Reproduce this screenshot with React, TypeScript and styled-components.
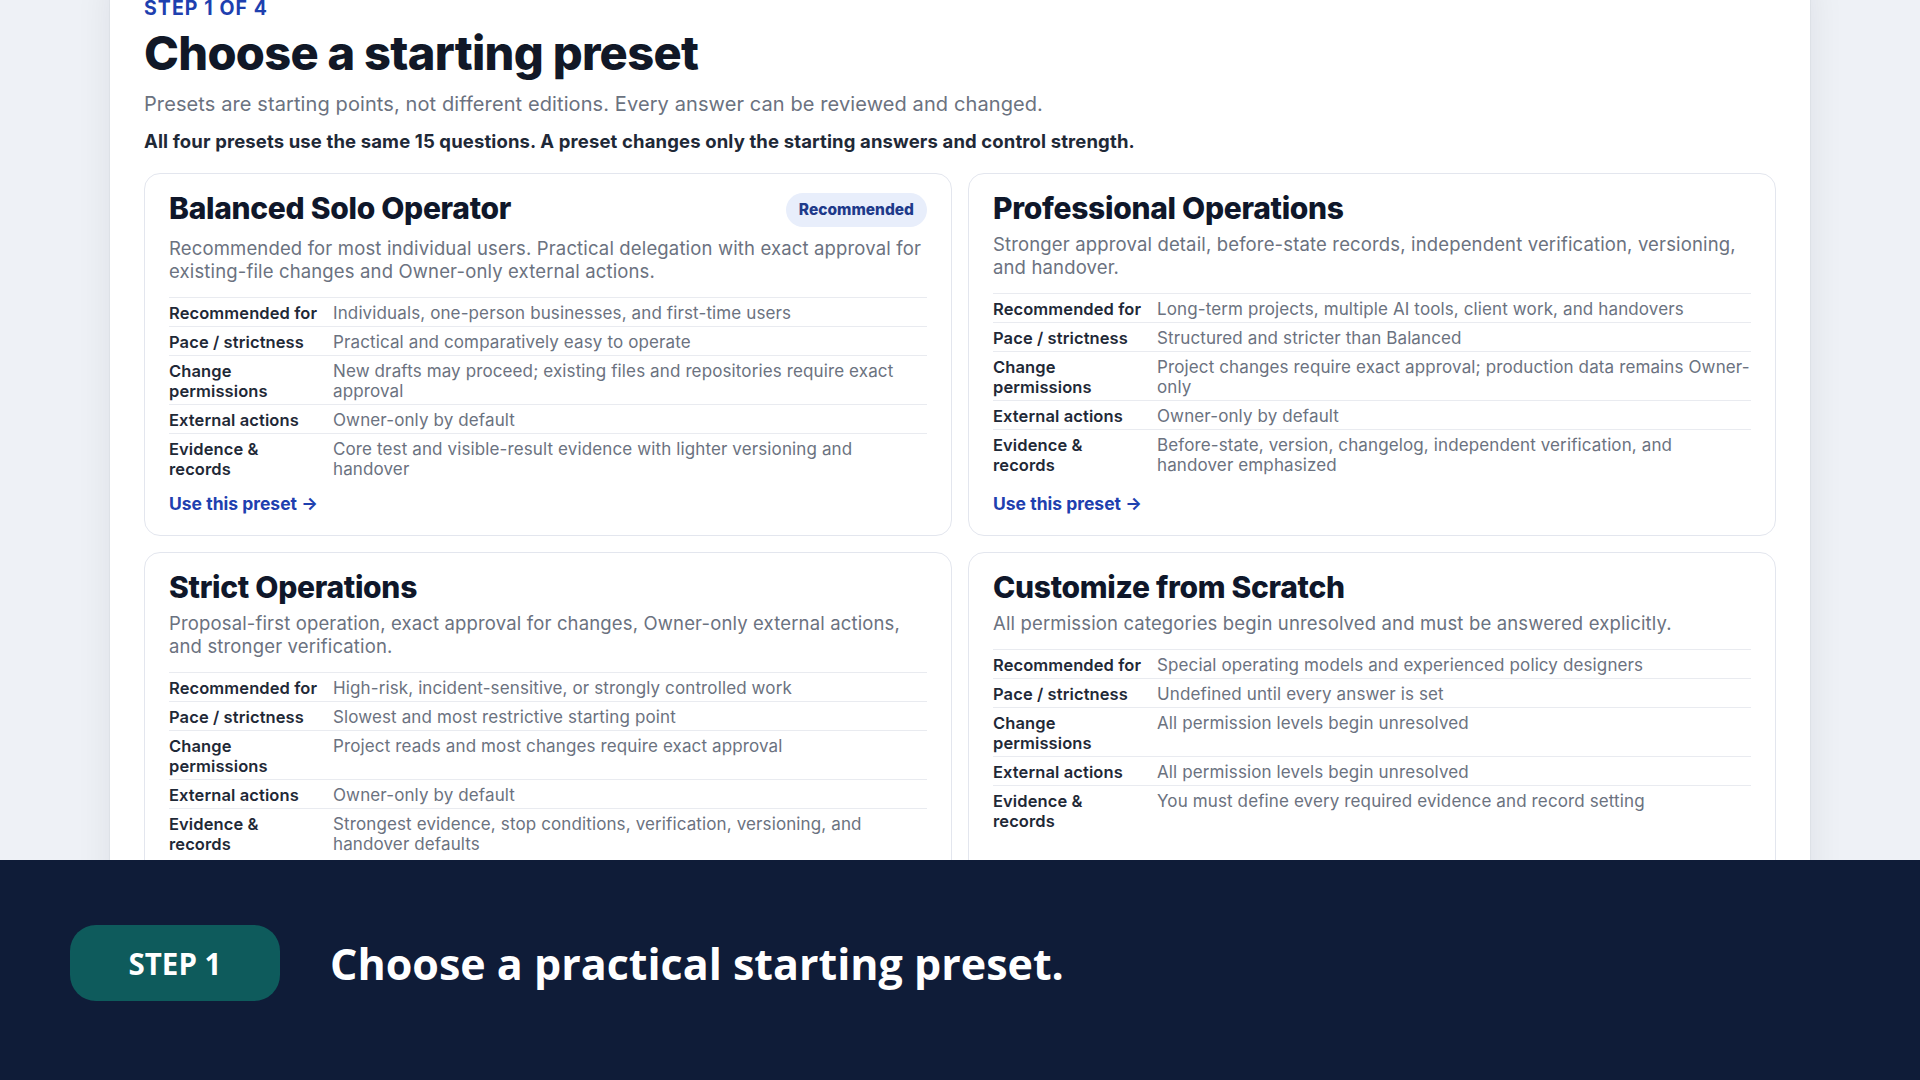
import styled, { createGlobalStyle } from "styled-components";

type Row = {
  label: string;
  value: string;
};

type Preset = {
  title: string;
  badge?: string;
  description: string;
  rows: Row[];
};

const LABELS = [
  "Recommended for",
  "Pace / strictness",
  "Change permissions",
  "External actions",
  "Evidence & records",
];

const makeRows = (values: string[]): Row[] =>
  values.map((value, i) => ({ label: LABELS[i], value }));

const PRESETS: Preset[] = [
  {
    title: "Balanced Solo Operator",
    badge: "Recommended",
    description:
      "Recommended for most individual users. Practical delegation with exact approval for existing-file changes and Owner-only external actions.",
    rows: makeRows([
      "Individuals, one-person businesses, and first-time users",
      "Practical and comparatively easy to operate",
      "New drafts may proceed; existing files and repositories require exact approval",
      "Owner-only by default",
      "Core test and visible-result evidence with lighter versioning and handover",
    ]),
  },
  {
    title: "Professional Operations",
    description:
      "Stronger approval detail, before-state records, independent verification, versioning, and handover.",
    rows: makeRows([
      "Long-term projects, multiple AI tools, client work, and handovers",
      "Structured and stricter than Balanced",
      "Project changes require exact approval; production data remains Owner-only",
      "Owner-only by default",
      "Before-state, version, changelog, independent verification, and handover emphasized",
    ]),
  },
  {
    title: "Strict Operations",
    description:
      "Proposal-first operation, exact approval for changes, Owner-only external actions, and stronger verification.",
    rows: makeRows([
      "High-risk, incident-sensitive, or strongly controlled work",
      "Slowest and most restrictive starting point",
      "Project reads and most changes require exact approval",
      "Owner-only by default",
      "Strongest evidence, stop conditions, verification, versioning, and handover defaults",
    ]),
  },
  {
    title: "Customize from Scratch",
    description:
      "All permission categories begin unresolved and must be answered explicitly.",
    rows: makeRows([
      "Special operating models and experienced policy designers",
      "Undefined until every answer is set",
      "All permission levels begin unresolved",
      "All permission levels begin unresolved",
      "You must define every required evidence and record setting",
    ]),
  },
];

const App = () => {
  return (
    <>
      <GlobalStyle />
      <Page>
        <Viewport>
          <Panel>
            <Eyebrow>Step 1 of 4</Eyebrow>
            <Heading>Choose a starting preset</Heading>
            <Lead>
              Presets are starting points, not different editions. Every answer
              can be reviewed and changed.
            </Lead>
            <Note>
              All four presets use the same 15 questions. A preset changes only
              the starting answers and control strength.
            </Note>
            <CardGrid>
              {PRESETS.map((preset) => (
                <Card key={preset.title}>
                  <CardHeader>
                    <CardTitle>{preset.title}</CardTitle>
                    {preset.badge && <Badge>{preset.badge}</Badge>}
                  </CardHeader>
                  <CardText>{preset.description}</CardText>
                  <Facts>
                    {preset.rows.map((row) => (
                      <Fact key={row.label}>
                        <FactLabel>{row.label}</FactLabel>
                        <FactValue>{row.value}</FactValue>
                      </Fact>
                    ))}
                  </Facts>
                  <UseLink href="#">Use this preset →</UseLink>
                </Card>
              ))}
            </CardGrid>
          </Panel>
        </Viewport>
        <Caption>
          <StepPill>STEP 1</StepPill>
          <CaptionText>Choose a practical starting preset.</CaptionText>
        </Caption>
      </Page>
    </>
  );
};

export default App;

const GlobalStyle = createGlobalStyle`
  html, body {
    margin: 0;
    padding: 0;
    overflow: hidden;
  }
  body {
    font-family: Inter, "Noto Sans", "Liberation Sans", sans-serif;
    background: #eef1f6;
    color: #111827;
  }
  * {
    box-sizing: border-box;
  }
`;

const Page = styled.div`
  width: 1920px;
  height: 1080px;
  display: flex;
  flex-direction: column;
`;

const Viewport = styled.div`
  height: 860px;
  overflow: hidden;
  background: #eef1f6;
`;

const Panel = styled.main`
  width: 1700px;
  margin: -36px auto 0;
  padding: 34px 34px 40px;
  background: #ffffff;
  border-radius: 18px;
  box-shadow: 0 12px 36px rgba(15, 23, 42, 0.08), 0 0 0 1px rgba(15, 23, 42, 0.03);
`;

const Eyebrow = styled.div`
  font-size: 19.5px;
  line-height: 20px;
  font-weight: 700;
  letter-spacing: 0.055em;
  text-transform: uppercase;
  color: #1e40af;
`;

const Heading = styled.h1`
  margin: 8px 0 0;
  font-size: 47px;
  line-height: 54px;
  font-weight: 800;
  letter-spacing: -0.015em;
  color: #111827;
`;

const Lead = styled.p`
  margin: 10px 0 0;
  font-size: 20px;
  line-height: 28px;
  letter-spacing: 0.1px;
  color: #6b7280;
`;

const Note = styled.p`
  margin: 10px 0 0;
  font-size: 18.5px;
  line-height: 26px;
  letter-spacing: 0.13px;
  font-weight: 700;
  color: #1f2937;
`;

const CardGrid = styled.div`
  display: grid;
  grid-template-columns: 1fr 1fr;
  gap: 16px;
  margin-top: 19px;
`;

const Card = styled.section`
  display: flex;
  flex-direction: column;
  padding: 19px 24px 21px;
  border: 1px solid #e3e6ee;
  border-radius: 16px;
  background: #ffffff;
`;

const CardHeader = styled.div`
  display: flex;
  align-items: flex-start;
  justify-content: space-between;
  gap: 16px;
`;

const CardTitle = styled.h2`
  margin: 0;
  font-size: 30px;
  line-height: 30px;
  font-weight: 800;
  letter-spacing: -0.01em;
  color: #0f172a;
`;

const Badge = styled.span`
  flex: none;
  padding: 8px 13px;
  border-radius: 999px;
  background: #e8eefb;
  color: #1e3a8a;
  font-size: 15.5px;
  line-height: 18px;
  font-weight: 800;
`;

const CardText = styled.p`
  margin: 10px 0 0;
  font-size: 18.5px;
  line-height: 23px;
  letter-spacing: 0.15px;
  color: #6b7280;
`;

const Facts = styled.div`
  margin-top: 14px;
`;

const Fact = styled.div`
  display: grid;
  grid-template-columns: 150px 1fr;
  column-gap: 14px;
  padding: 5px 0 3px;
  border-top: 1px solid #e9ebf0;
  line-height: 20px;
`;

const FactLabel = styled.div`
  font-size: 16.5px;
  letter-spacing: 0.1px;
  font-weight: 600;
  color: #1f2937;
`;

const FactValue = styled.div`
  font-size: 17px;
  letter-spacing: 0.12px;
  color: #6b7280;
`;

const UseLink = styled.a`
  align-self: flex-start;
  margin-top: auto;
  padding-top: 12px;
  font-size: 17.5px;
  line-height: 20px;
  font-weight: 700;
  color: #1e40af;
  text-decoration: none;
`;

const Caption = styled.footer`
  flex: 1;
  display: flex;
  align-items: center;
  gap: 50px;
  padding: 0 70px 14px;
  background: #0f1c38;
`;

const StepPill = styled.div`
  display: flex;
  align-items: center;
  justify-content: center;
  width: 210px;
  height: 76px;
  border-radius: 26px;
  background: #0e5b5c;
  color: #ffffff;
  font-family: "Open Sans", "Noto Sans", sans-serif;
  font-size: 29.5px;
  font-weight: 700;
`;

const CaptionText = styled.div`
  color: #ffffff;
  font-family: "Open Sans", "Noto Sans", sans-serif;
  font-size: 43px;
  font-weight: 700;
`;
